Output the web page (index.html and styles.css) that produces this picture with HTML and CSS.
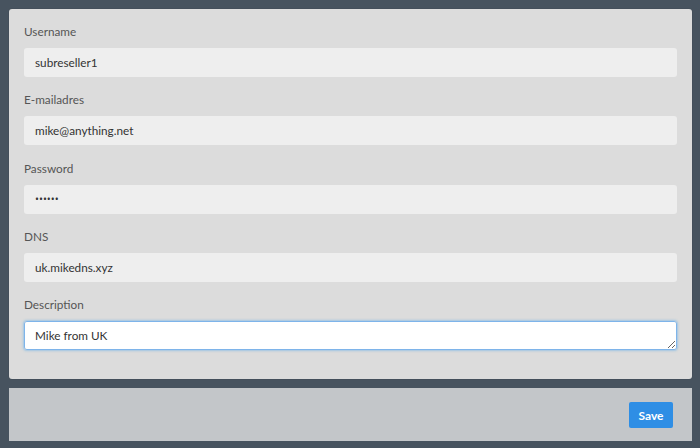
FILE: index.html
```html
<!DOCTYPE html>
<html>
<head>
<meta charset="utf-8">
<link rel="stylesheet" href="styles.css">
</head>
<body>
<div class="page">
  <form class="card">
    <div class="group">
      <label class="label">Username</label>
      <input class="field" type="text" value="subreseller1">
    </div>
    <div class="group">
      <label class="label">E-mailadres</label>
      <input class="field" type="text" value="mike@anything.net">
    </div>
    <div class="group">
      <label class="label">Password</label>
      <input class="field secret" type="password" value="secret">
    </div>
    <div class="group">
      <label class="label">DNS</label>
      <input class="field" type="text" value="uk.mikedns.xyz">
    </div>
    <div class="group">
      <label class="label">Description</label>
      <textarea class="field area" rows="1">Mike from UK</textarea>
    </div>
  </form>
  <div class="footer">
    <button class="save" type="button">Save</button>
  </div>
</div>
</body>
</html>
```
FILE: styles.css
```css
html, body {
  margin: 0;
  padding: 0;
  background: #47535f;
  font-family: "Lato", "Open Sans", sans-serif;
}
.page {
  padding: 9px 8px 7px 9px;
  display: flex;
  flex-direction: column;
  gap: 9px;
}
.card {
  margin: 0;
  background: #dcdcdc;
  border-radius: 3px;
  padding: 14px 15px 29px 15px;
  display: flex;
  flex-direction: column;
  gap: 14.25px;
  box-shadow: 0 0 0 1px rgba(0,0,0,0.04);
}
.group {
  display: flex;
  flex-direction: column;
}
.label {
  font-size: 11.75px;
  line-height: 18px;
  color: #555;
  margin-bottom: 7px;
}
.field {
  box-sizing: border-box;
  height: 29px;
  border: none;
  border-radius: 3px;
  background: #eeeeee;
  padding: 0 11px;
  font-family: "Lato", "Open Sans", sans-serif;
  font-size: 11.75px;
  color: #333;
  outline: none;
}
.secret {
  font-family: "Open Sans", sans-serif;
  font-size: 10.5px;
  letter-spacing: 0;
}
.area {
  background: #fff;
  border: 1px solid #7eb4ea;
  box-shadow: 0 0 2px 1px rgba(102,175,233,0.5);
  padding: 6px 10px;
  line-height: 16px;
  resize: vertical;
  display: block;
}
.footer {
  background: #c3c6c9;
  height: 53px;
  padding: 0 19px 0 0;
  display: flex;
  justify-content: flex-end;
  align-items: center;
}
.save {
  width: 44px;
  height: 26px;
  margin-top: 1px;
  border: none;
  border-radius: 2px;
  background: #2e8ee5;
  color: #fff;
  font-family: "Lato", "Open Sans", sans-serif;
  font-weight: 700;
  font-size: 12px;
  padding: 0;
}
```
